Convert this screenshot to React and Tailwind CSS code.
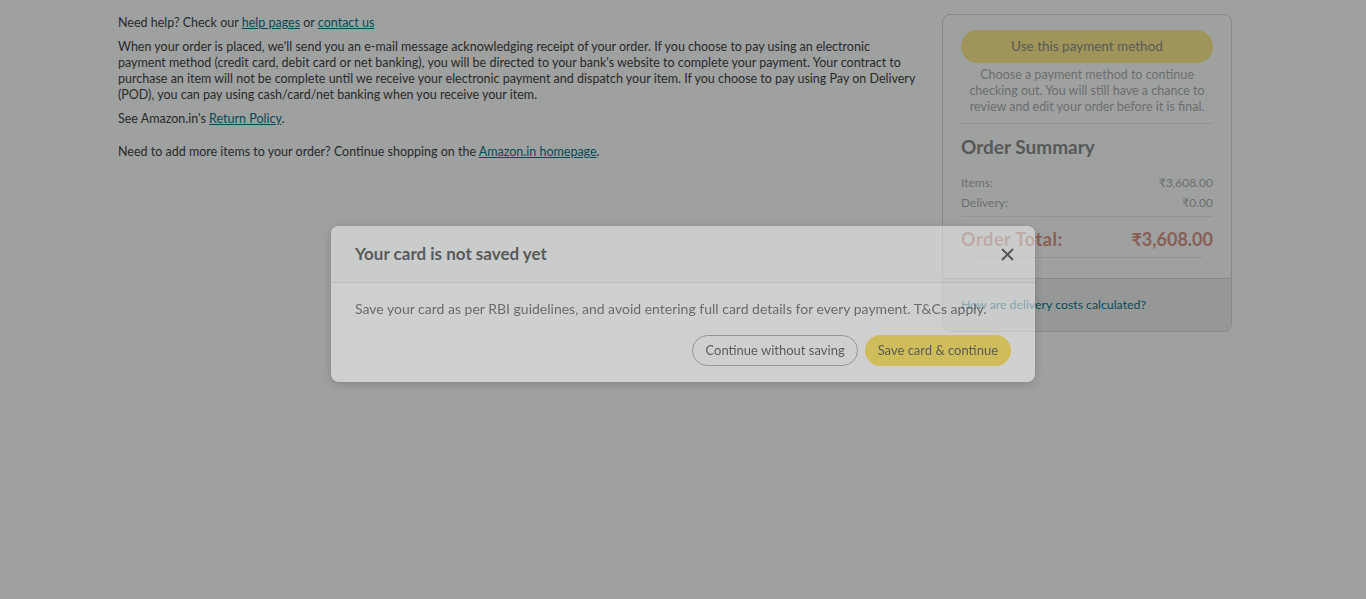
import React from 'react';

function SummaryCard() {
  return (
    <div className="w-[290px] h-[318px] border border-[#d5d9d9] rounded-lg bg-white flex flex-col overflow-hidden">
      <div className="opacity-50 flex-1 px-[18px] pt-[15px]">
        <button className="w-full h-[33px] rounded-full bg-[#ffd814] text-[13.5px] text-[#0f1111]">
          Use this payment method
        </button>
        <p className="mt-[4px] text-center text-[12.5px] leading-[16px] text-[#565959]">
          Choose a payment method to continue checking out. You will still have a chance to review and edit your order before it is final.
        </p>
        <div className="mt-[8px] h-px bg-[#d5d9d9]"></div>
        <h2 className="mt-[11px] text-[19px] leading-[24px] font-bold">Order Summary</h2>
        <div className="mt-[16px] flex justify-between text-[12px] leading-[16px] text-[#565959]">
          <span>Items:</span>
          <span>₹3,608.00</span>
        </div>
        <div className="mt-[4px] flex justify-between text-[12px] leading-[16px] text-[#565959]">
          <span>Delivery:</span>
          <span>₹0.00</span>
        </div>
        <div className="mt-[5px] h-px bg-[#d5d9d9]"></div>
        <div className="mt-[10px] flex justify-between text-[18px] leading-[24px] font-bold text-[#b12704]">
          <span className="tracking-[0.6px]">Order Total:</span>
          <span>₹3,608.00</span>
        </div>
        <div className="mt-[6px] mx-[10px] h-px bg-[#d5d9d9]"></div>
      </div>
      <div className="h-[53px] border-t border-[#d5d9d9] bg-[#f0f2f2] px-[18px] flex items-center text-[12.3px] text-[#007185]">
        How are delivery costs calculated?
      </div>
    </div>
  );
}

function SaveCardModal() {
  return (
    <div className="fixed inset-0 flex justify-center pt-[226px]">
      <div className="w-[704px] h-[156px] rounded-lg bg-white opacity-50 shadow-[0_2px_8px_rgba(0,0,0,0.35)] overflow-hidden">
        <div className="h-[57px] bg-[#f5f6f6] border-b border-[#d5d9d9] flex items-center justify-between pl-[24px] pr-[21px]">
          <h3 className="text-[17px] font-bold text-[#0f1111]">Your card is not saved yet</h3>
          <svg width="13" height="13" viewBox="0 0 13 13" fill="none" stroke="#0f1111" strokeWidth="2">
            <path d="M1 1 L12 12 M12 1 L1 12" />
          </svg>
        </div>
        <div className="px-[24px] pt-[16px]">
          <p className="text-[14px] leading-[20px] text-[#333]">
            Save your card as per RBI guidelines, and avoid entering full card details for every payment. T&amp;Cs apply.
          </p>
          <div className="mt-[16px] flex justify-end gap-[7px]">
            <button className="h-[31px] px-[12px] rounded-full border border-[#888c8c] bg-white text-[13px] text-[#0f1111]">
              Continue without saving
            </button>
            <button className="h-[31px] px-[13px] rounded-full bg-[#ffd814] text-[13px] text-[#0f1111]">
              Save card &amp; continue
            </button>
          </div>
        </div>
      </div>
    </div>
  );
}

export default function App() {
  return (
    <div className="min-h-[599px] bg-white font-['Lato',sans-serif] text-[#0f1111]">
      <div className="flex gap-[22px] pl-[118px] pt-[14px]">
        <div className="w-[802px] pt-[1px] text-[12.5px] leading-[16px] text-[#3a3a3a]">
          <p>
            Need help? Check our <a className="text-[#007185] underline">help pages</a> or{' '}
            <a className="text-[#007185] underline">contact us</a>
          </p>
          <p className="mt-[8px]">
            When your order is placed, we'll send you an e-mail message acknowledging receipt of your order. If you choose to pay using an electronic payment method (credit card, debit card or net banking), you will be directed to your bank's website to complete your payment. Your contract to purchase an item will not be complete until we receive your electronic payment and dispatch your item. If you choose to pay using Pay on Delivery (POD), you can pay using cash/card/net banking when you receive your item.
          </p>
          <p className="mt-[8px]">
            See Amazon.in's <a className="text-[#007185] underline">Return Policy</a>.
          </p>
          <p className="mt-[17px]">
            Need to add more items to your order? Continue shopping on the{' '}
            <a className="text-[#007185] underline">Amazon.in homepage</a>.
          </p>
        </div>
        <SummaryCard />
      </div>
      <div className="fixed inset-0 bg-[#0f1111]/40"></div>
      <SaveCardModal />
    </div>
  );
}
